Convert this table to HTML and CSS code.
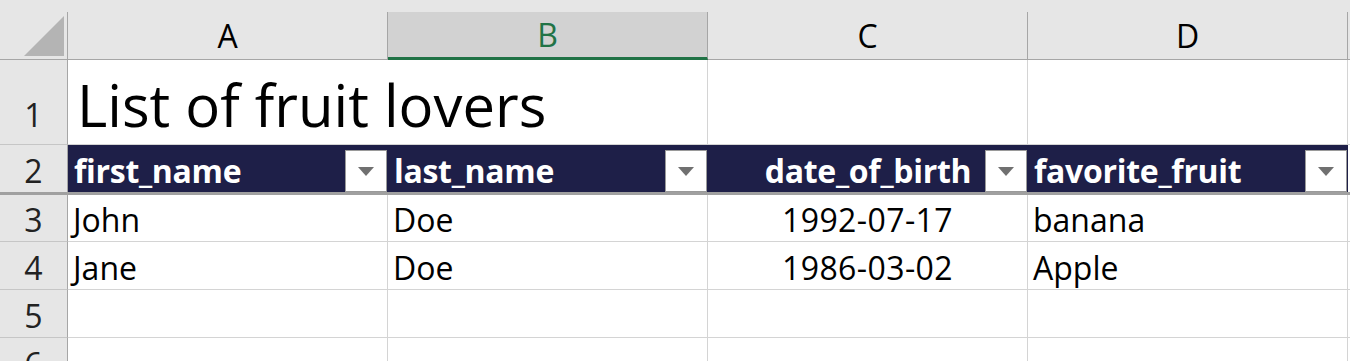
FILE: index.html
```html
<!DOCTYPE html>
<html lang="en">
<head>
    <meta charset="UTF-8">
    <meta name="viewport" content="width=device-width, initial-scale=1.0">
    <title>Fruit lovers</title>
    <link rel="stylesheet" href="styles.css">
</head>
<body>

    <div class="sheet">
        <div class="strip"></div>

        <div class="grid">
            <!-- column letters -->
            <div class="corner">
                <svg width="40" height="40" viewBox="0 0 40 40"><polygon points="40,0 40,40 0,40" fill="#b4b4b4"/></svg>
            </div>
            <div class="col-head">A</div>
            <div class="col-head selected">B</div>
            <div class="col-head">C</div>
            <div class="col-head">D</div>
            <div class="col-head"></div>

            <!-- row 1: title -->
            <div class="row-head first">1</div>
            <div class="cell title">List of fruit lovers</div>
            <div class="cell"></div>
            <div class="cell"></div>
            <div class="cell"></div>

            <!-- row 2: table header -->
            <div class="row-head frozen">2</div>
            <div class="th">first_name<span class="filter"></span></div>
            <div class="th">last_name<span class="filter"></span></div>
            <div class="th center">date_of_birth<span class="filter"></span></div>
            <div class="th">favorite_fruit<span class="filter"></span></div>
            <div class="cell frozen"></div>

            <!-- data -->
            <div class="row-head">3</div>
            <div class="cell">John</div>
            <div class="cell">Doe</div>
            <div class="cell center">1992-07-17</div>
            <div class="cell">banana</div>
            <div class="cell"></div>

            <div class="row-head">4</div>
            <div class="cell">Jane</div>
            <div class="cell">Doe</div>
            <div class="cell center">1986-03-02</div>
            <div class="cell">Apple</div>
            <div class="cell"></div>

            <div class="row-head">5</div>
            <div class="cell"></div>
            <div class="cell"></div>
            <div class="cell"></div>
            <div class="cell"></div>
            <div class="cell"></div>

            <div class="row-head">6</div>
            <div class="cell"></div>
            <div class="cell"></div>
            <div class="cell"></div>
            <div class="cell"></div>
            <div class="cell"></div>
        </div>
    </div>

</body>
</html>
```

FILE: styles.css
```css
body {
    margin: 0;
    background-color: #fff;
    font-family: 'Open Sans', 'Liberation Sans', sans-serif;
    color: #000;
}

.sheet {
    width: 1350px;
    height: 361px;
    overflow: hidden;
    background-color: #e6e6e6;
}

.strip {
    height: 12px;
}

.grid {
    display: grid;
    grid-template-columns: 68px 320px 320px 320px 320px 100px;
    grid-template-rows: 48px 85px 50px 47px 48px 48px 48px;
    width: 1448px;
    font-size: 32px;
}

.grid > div {
    box-sizing: border-box;
    display: flex;
}

/* Headers */
.corner {
    justify-content: flex-end;
    align-items: flex-end;
    padding: 0 3px 3px 0;
    border-right: 1px solid #a6a6a6;
    border-bottom: 1px solid #a6a6a6;
}

.col-head {
    justify-content: center;
    align-items: center;
    border-right: 1px solid #a6a6a6;
    border-bottom: 1px solid #a6a6a6;
}

.col-head.selected {
    background-color: #d2d2d2;
    color: #217346;
    border-bottom: 3px solid #217346;
}

.row-head {
    justify-content: center;
    align-items: flex-end;
    color: #222;
    border-right: 1px solid #a6a6a6;
    border-bottom: 1px solid #c6c6c6;
}

.row-head.first {
    padding-bottom: 8px;
}

/* Cells */
.cell {
    align-items: flex-end;
    padding: 0 5px;
    background-color: #fff;
    border-right: 1px solid #d4d4d4;
    border-bottom: 1px solid #d4d4d4;
    white-space: nowrap;
}

.cell.center {
    justify-content: center;
    letter-spacing: 0.4px;
}

.cell.title {
    grid-column: span 2;
    padding-left: 9px;
    font-size: 58px;
}

.frozen,
.row-head.frozen,
.cell.frozen {
    border-bottom: 3px solid #a0a0a0;
}

/* Table header row */
.th {
    position: relative;
    align-items: flex-end;
    padding: 0 6px;
    background-color: #1e1f48;
    color: #fff;
    font-weight: bold;
    letter-spacing: -0.3px;
    border-bottom: 3px solid #a0a0a0;
    white-space: nowrap;
}

.th.center {
    justify-content: center;
}

.filter {
    position: absolute;
    right: 1px;
    bottom: 0;
    width: 42px;
    height: 42px;
    box-sizing: border-box;
    background-color: #fff;
    border: 1px solid #9a9a9a;
    display: flex;
    align-items: center;
    justify-content: center;
}

.filter::after {
    content: "";
    border-left: 8px solid transparent;
    border-right: 8px solid transparent;
    border-top: 9px solid #707070;
}
```
